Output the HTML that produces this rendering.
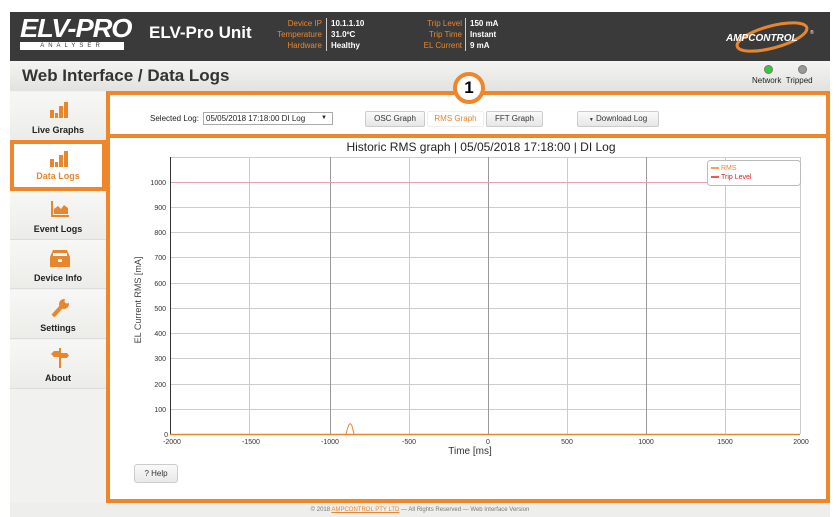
<!DOCTYPE html>
<html><head><meta charset="utf-8"><style>
*{margin:0;padding:0;box-sizing:border-box}
body{width:839px;height:517px;background:#fff;font-family:"Liberation Sans",sans-serif;position:relative;overflow:hidden}
.hdr{position:absolute;left:10px;top:12px;width:820px;height:49px;background:#3a3a3a}
.lbl{position:absolute;color:#e8862e;font-size:8px;text-align:right;line-height:11px}
.val{position:absolute;color:#fff;font-size:8px;font-weight:bold;line-height:11px;border-left:1px solid #ccc;padding-left:4px}
.tbar{position:absolute;left:10px;top:61px;width:820px;height:30px;background:linear-gradient(#f4f4f2,#e2e2de)}
.side{position:absolute;left:10px;top:91px;width:96px;height:412px;background:#f1f1ef}
.item{position:absolute;left:10px;width:96px;height:49px;border-bottom:1px solid #ddd;background:linear-gradient(#f7f7f5,#ecece9);text-align:center;font-size:9px;font-weight:bold;color:#222}
.item .t{position:absolute;left:0;right:0;bottom:5px}
.box{position:absolute;border:4px solid #f0862a}
.btn{position:absolute;top:111px;height:16px;border:1px solid #ccc;border-radius:2px;background:linear-gradient(#fafafa,#e6e6e6);font-size:8px;color:#333;text-align:center;line-height:14px}
.foot{position:absolute;left:10px;top:503px;width:820px;height:14px;background:#eeeeec;font-size:6px;color:#777;text-align:center;line-height:14px}
</style></head><body>
<div class="hdr"></div>
<div style="position:absolute;left:20px;top:15px;color:#fff;font-size:26px;font-style:italic;font-weight:bold;letter-spacing:-1px;line-height:27px;transform:scaleX(1.05);transform-origin:left">ELV-PRO</div>
<div style="position:absolute;left:20px;top:42px;width:104px;height:8px;background:#fff;color:#3a3a3a;font-size:6px;line-height:8px;letter-spacing:4px;text-align:center">ANALYSER</div>
<div style="position:absolute;left:149px;top:23px;color:#fff;font-size:17px;font-weight:bold">ELV-Pro Unit</div>
<div class="lbl" style="left:260px;top:18px;width:62px">Device IP<br>Temperature<br>Hardware</div>
<div class="val" style="left:326px;top:18px">10.1.1.10<br>31.0ºC<br>Healthy</div>
<div class="lbl" style="left:400px;top:18px;width:62px">Trip Level<br>Trip Time<br>EL Current</div>
<div class="val" style="left:465px;top:18px">150 mA<br>Instant<br>9 mA</div>
<svg style="position:absolute;left:722px;top:20px" width="100" height="34"><ellipse cx="50" cy="17" rx="36" ry="11" fill="none" stroke="#e8862e" stroke-width="3" transform="rotate(-15 50 17)"/><text x="4" y="21" fill="#fff" font-size="10" font-weight="bold" font-style="italic" font-family="Liberation Sans">AMPCONTROL</text><text x="88" y="14" fill="#fff" font-size="5">®</text></svg>
<div class="tbar"></div>
<div style="position:absolute;left:22px;top:66px;font-size:17px;font-weight:bold;color:#333">Web Interface / Data Logs</div>
<div style="position:absolute;left:764px;top:65px;width:9px;height:9px;border-radius:50%;background:#3c3;border:1px solid #777"></div>
<div style="position:absolute;left:798px;top:65px;width:9px;height:9px;border-radius:50%;background:#999;border:1px solid #777"></div>
<div style="position:absolute;left:752px;top:76px;font-size:8px;color:#222">Network&nbsp;&nbsp;Tripped</div>
<div class="side"></div>
<div class="item" style="top:92px"><svg style="position:absolute;left:40px;top:10px" width="18" height="16"><rect x="0" y="8" width="4" height="8" fill="#e8862e"/><rect x="5" y="11" width="3" height="5" fill="#e8862e"/><rect x="9" y="4" width="4" height="12" fill="#e8862e"/><rect x="14" y="0" width="4" height="16" fill="#e8862e"/></svg><div class="t">Live Graphs</div></div>
<div class="item" style="top:191px"><svg style="position:absolute;left:41px;top:10px" width="18" height="16"><path d="M1 0V15H18" stroke="#e8862e" stroke-width="2" fill="none"/><path d="M3 13V8L7 5L10 8L13 4L17 7V13Z" fill="#e8862e"/></svg><div class="t">Event Logs</div></div>
<div class="item" style="top:240px"><svg style="position:absolute;left:40px;top:10px" width="20" height="17"><path d="M3 0H17L20 7V17H0V7Z" fill="#e8862e"/><rect x="3" y="3" width="14" height="3" fill="#fff"/><rect x="8" y="9" width="4" height="3" fill="#fff"/></svg><div class="t">Device Info</div></div>
<div class="item" style="top:290px"><svg style="position:absolute;left:40px;top:8px" width="20" height="20"><path d="M3 18L12 8" stroke="#e8862e" stroke-width="4"/><circle cx="14" cy="6" r="5" fill="#e8862e"/><circle cx="17" cy="3" r="2.5" fill="#f3f3f1"/></svg><div class="t">Settings</div></div>
<div class="item" style="top:340px"><svg style="position:absolute;left:40px;top:8px" width="20" height="20"><rect x="9" y="0" width="2" height="20" fill="#e8862e"/><path d="M1 6L4 3H9V9H4Z" fill="#e8862e"/><path d="M11 5H17L19 7.5L17 10H11Z" fill="#e8862e"/></svg><div class="t">About</div></div>
<div class="item" style="top:140px;background:#fff;border:4px solid #f0862a;height:51px;color:#e8862e"><svg style="position:absolute;left:36px;top:7px" width="18" height="16"><rect x="0" y="8" width="4" height="8" fill="#e8862e"/><rect x="5" y="11" width="3" height="5" fill="#e8862e"/><rect x="9" y="4" width="4" height="12" fill="#e8862e"/><rect x="14" y="0" width="4" height="16" fill="#e8862e"/></svg><div class="t" style="bottom:6px">Data Logs</div></div>
<div class="box" style="left:106px;top:91px;width:724px;height:47px;background:#fff"></div>
<div class="box" style="left:106px;top:134px;width:724px;height:369px;background:#fff"></div>
<div style="position:absolute;left:453px;top:72px;width:32px;height:32px;border-radius:50%;border:4px solid #f0862a;background:#fff;font-size:17px;font-weight:bold;text-align:center;line-height:24px">1</div>
<div style="position:absolute;left:150px;top:114px;font-size:8px;color:#222">Selected Log:</div>
<div style="position:absolute;left:203px;top:112px;width:130px;height:13px;border:1px solid #aaa;font-size:8px;color:#222;line-height:11px;padding-left:2px">05/05/2018 17:18:00 DI Log<span style="position:absolute;right:5px;font-size:6px">▼</span></div>
<div class="btn" style="left:365px;width:60px">OSC Graph</div>
<div class="btn" style="left:427px;width:57px;background:#fff;color:#e8862e;border-color:#eee">RMS Graph</div>
<div class="btn" style="left:486px;width:57px">FFT Graph</div>
<div class="btn" style="left:577px;width:82px"><span style="font-size:5px">▼</span> Download Log</div>
<div style="position:absolute;left:0;width:839px;top:140px;text-align:center;font-size:12px;padding-left:123px;color:#222">Historic RMS graph | 05/05/2018 17:18:00 | DI Log</div>
<svg style="position:absolute;left:0;top:0" width="839" height="517" font-family="Liberation Sans">
<g stroke="#ccc" stroke-width="1">
<line x1="170" y1="157.5" x2="800" y2="157.5"/>
<line x1="170" y1="207.5" x2="800" y2="207.5"/><line x1="170" y1="232.5" x2="800" y2="232.5"/><line x1="170" y1="257.5" x2="800" y2="257.5"/><line x1="170" y1="283.5" x2="800" y2="283.5"/><line x1="170" y1="308.5" x2="800" y2="308.5"/><line x1="170" y1="333.5" x2="800" y2="333.5"/><line x1="170" y1="358.5" x2="800" y2="358.5"/><line x1="170" y1="384.5" x2="800" y2="384.5"/><line x1="170" y1="409.5" x2="800" y2="409.5"/>
<line x1="249.5" y1="157" x2="249.5" y2="434"/><line x1="409.5" y1="157" x2="409.5" y2="434"/><line x1="567.5" y1="157" x2="567.5" y2="434"/><line x1="725.5" y1="157" x2="725.5" y2="434"/><line x1="800.5" y1="157" x2="800.5" y2="434"/>
</g>
<g stroke="#999"><line x1="330.5" y1="157" x2="330.5" y2="434"/><line x1="488.5" y1="157" x2="488.5" y2="434"/><line x1="646.5" y1="157" x2="646.5" y2="434"/></g>
<line x1="170" y1="182.5" x2="800" y2="182.5" stroke="#e8a0b0"/>
<line x1="170.5" y1="157" x2="170.5" y2="435" stroke="#333"/>
<line x1="170" y1="434.5" x2="800" y2="434.5" stroke="#e8862e" stroke-width="1.5"/>
<path d="M346 434L348 427Q350 421 352 426L354 434" stroke="#e8862e" fill="none"/>
<g font-size="7" fill="#333" text-anchor="end"><text x="166" y="185">1000</text><text x="166" y="210">900</text><text x="166" y="235">800</text><text x="166" y="260">700</text><text x="166" y="286">600</text><text x="166" y="311">500</text><text x="166" y="336">400</text><text x="166" y="361">300</text><text x="166" y="387">200</text><text x="166" y="412">100</text><text x="168" y="437">0</text></g>
<g font-size="7" fill="#333" text-anchor="middle"><text x="172" y="444">-2000</text><text x="251" y="444">-1500</text><text x="330" y="444">-1000</text><text x="409" y="444">-500</text><text x="488" y="444">0</text><text x="567" y="444">500</text><text x="646" y="444">1000</text><text x="725" y="444">1500</text><text x="801" y="444">2000</text></g>
<text x="470" y="454" font-size="10" fill="#333" text-anchor="middle">Time [ms]</text>
<text transform="translate(141 300) rotate(-90)" font-size="9" fill="#444" text-anchor="middle">EL Current RMS [mA]</text>
<rect x="707.5" y="160.5" width="93" height="25" rx="3" fill="#fff" stroke="#bbb"/>
<line x1="711" y1="168" x2="719" y2="168" stroke="#e8862e" stroke-width="1.5"/><text x="721" y="170" font-size="7" fill="#e8862e">RMS</text>
<line x1="711" y1="177" x2="719" y2="177" stroke="#d22" stroke-width="1.5"/><text x="721" y="179" font-size="7" fill="#d22">Trip Level</text>
</svg>
<div style="position:absolute;left:134px;top:464px;width:44px;height:19px;border:1px solid #ccc;border-radius:3px;background:linear-gradient(#fafafa,#e8e8e8);font-size:8px;text-align:center;line-height:17px;color:#333">? Help</div>
<div class="foot">© 2018 <span style="color:#e8862e;text-decoration:underline">AMPCONTROL PTY LTD</span> — All Rights Reserved — Web Interface Version</div>
</body></html>
